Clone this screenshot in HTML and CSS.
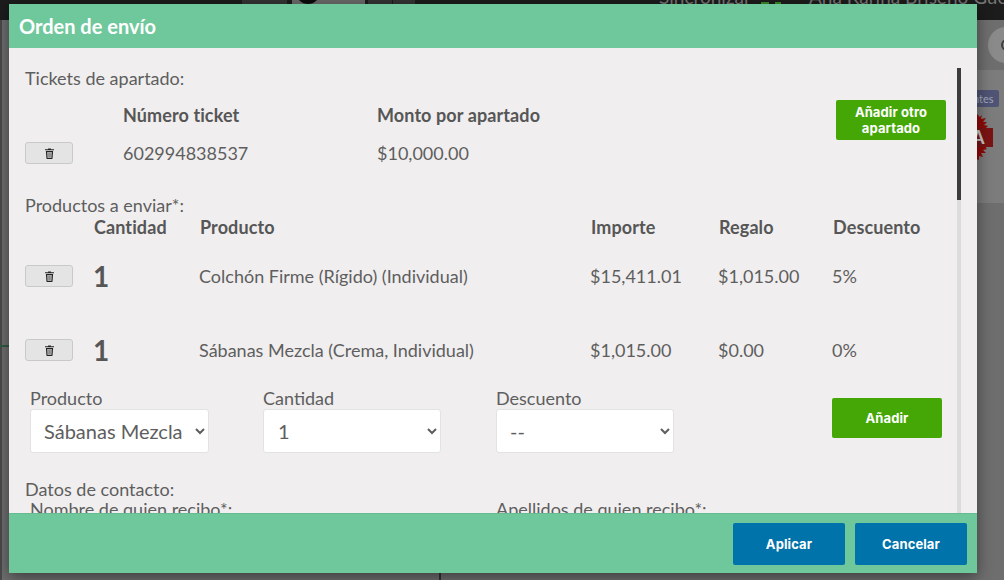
FILE: index.html
```html
<!DOCTYPE html>
<html lang="es">
<head>
<meta charset="utf-8">
<title>Orden de envío</title>
<link rel="stylesheet" href="styles.css">
</head>
<body>
<div class="backdrop">
  <div class="topbar">
    <span class="tab tab-a"></span><span class="tab tab-b"></span><span class="tab-dot"></span><span class="tab tab-c"></span><span class="tab tab-d"></span>
    <span class="topbar-text sync">Sincronizar</span>
    <span class="sync-mark"></span>
    <span class="topbar-text user">Ana Karina Briseño Guerrero</span>
  </div>
  <div class="bg-rail"></div>
  <div class="bg-rule"></div>
  <div class="bg-circle"><span class="bg-ring"></span></div>
  <div class="bg-panel"></div>
  <div class="bg-badge">ntes</div>
  <svg class="bg-logo" width="30" height="56" viewBox="0 0 30 56"><path d="M2 0l3 3 2-2-1 4 5-1-3 4 4 0-3 3 4 1-2 2v20l1 1-4 1 3 3-5 0 2 4-4-1 0 4-3-1 0 5-3 3V0z" fill="#8f0a0a"/><path d="M0 14h18v19H0z" fill="#7a1414"/><text x="-3" y="30" class="bg-logo-text">A</text></svg>
  <div class="bg-line"></div>
</div>

<div class="modal">
  <header class="modal-head">Orden de envío</header>
  <div class="modal-body">
    <div class="content">
      <p class="section-label">Tickets de apartado:</p>
      <div class="tickets">
        <div class="ticket-grid">
          <span></span>
          <strong>Número ticket</strong>
          <strong>Monto por apartado</strong>
          <button class="del" type="button" aria-label="Eliminar"><svg class="trash" viewBox="0 0 10 12"><use href="#t"/></svg></button>
          <span>602994838537</span>
          <span>$10,000.00</span>
        </div>
        <button class="btn green add-other" type="button">Añadir otro apartado</button>
      </div>

      <p class="section-label products-label">Productos a enviar*:</p>
      <div class="product-grid head">
        <span></span><strong>Cantidad</strong><strong>Producto</strong><strong>Importe</strong><strong>Regalo</strong><strong>Descuento</strong>
      </div>
      <div class="product-grid row">
        <button class="del" type="button" aria-label="Eliminar"><svg class="trash" viewBox="0 0 10 12"><use href="#t"/></svg></button>
        <b class="qty">1</b><span>Colchón Firme (Rígido) (Individual)</span><span>$15,411.01</span><span>$1,015.00</span><span>5%</span>
      </div>
      <div class="product-grid row second">
        <button class="del" type="button" aria-label="Eliminar"><svg class="trash" viewBox="0 0 10 12"><use href="#t"/></svg></button>
        <b class="qty">1</b><span>Sábanas Mezcla (Crema, Individual)</span><span>$1,015.00</span><span>$0.00</span><span>0%</span>
      </div>

      <div class="form-row">
        <label class="field">Producto
          <select><option>Sábanas Mezcla (Crema, Individual)</option></select>
        </label>
        <label class="field">Cantidad
          <select><option>1</option></select>
        </label>
        <label class="field">Descuento
          <select><option>--</option></select>
        </label>
        <button class="btn green add" type="button">Añadir</button>
      </div>

      <p class="section-label contact-label">Datos de contacto:</p>
      <div class="contact-row">
        <span>Nombre de quien recibo*:</span>
        <span>Apellidos de quien recibo*:</span>
      </div>
    </div>
    <div class="scrollbar"><div class="thumb"></div></div>
  </div>
  <footer class="modal-foot">
    <button class="btn blue" type="button">Aplicar</button>
    <button class="btn blue" type="button">Cancelar</button>
  </footer>
</div>

<svg class="defs" width="0" height="0" aria-hidden="true"><symbol id="t" viewBox="0 0 10 12"><path d="M3.4 1.3V.4h3.2v.9H10v1.2H0V1.3z" fill="#222"/><path d="M1 3.2h8l-.6 8.1a.7.7 0 0 1-.7.7H2.3a.7.7 0 0 1-.7-.7zM2.6 4.3l.3 6.6h4.2l.3-6.6z" fill="#222" fill-rule="evenodd"/><path d="M4 4.6h.7v6H4zM5.3 4.6H6v6h-.7z" fill="#222"/></symbol></svg>
</body>
</html>
```
FILE: styles.css
```css
* { box-sizing: border-box; }
html, body { margin: 0; height: 100%; }
body {
  width: 1004px; height: 580px; overflow: hidden; position: relative;
  background: #6e6e6e;
  font-family: Lato, "Liberation Sans", sans-serif;
  font-size: 18px; color: #5e5e5e;
}
.backdrop { position: absolute; inset: 0; overflow: hidden; background: #6e6e6e; }
.topbar { height: 20px; background: #1c1c1c; position: relative; overflow: hidden; }
.tab { position: absolute; top: 0; height: 4px; background: #343434; }
.tab-a { left: 242px; width: 45px; }
.tab-b { left: 292px; width: 73px; background: #6a6a6a; }
.tab-dot { position: absolute; left: 296px; top: -20px; width: 24px; height: 24px; border-radius: 50%; background: #0c0c0c; }
.tab-c { left: 368px; width: 24px; }
.tab-d { left: 393px; width: 22px; }
.topbar-text { position: absolute; top: -13px; font-size: 19px; line-height: 20px; color: #777; white-space: nowrap; }
.sync { left: 659px; }
.sync-mark { position: absolute; left: 761px; top: 2px; width: 20px; height: 2px; background: linear-gradient(90deg, #3c8a2a 0 8px, transparent 8px 14px, #3c8a2a 14px); }
.user { left: 809px; }
.bg-rail { position: absolute; left: 0; top: 20px; bottom: 0; width: 2px; background: #4a4a4a; }
.bg-rule { position: absolute; left: 0; top: 345px; width: 9px; height: 2px; background: #2f5a45; }
.bg-circle { position: absolute; left: 988px; top: 27px; width: 36px; height: 36px; border-radius: 50%; background: #8a8a8a; }
.bg-ring { position: absolute; left: 13px; top: 12px; width: 12px; height: 12px; border: 2px solid #3f3f3f; border-radius: 50%; }
.bg-panel { position: absolute; left: 977px; top: 70px; width: 27px; height: 133px; background: #7c7c7c; }
.bg-badge { position: absolute; left: 970px; top: 90px; width: 29px; height: 17px; padding-left: 3px; border-radius: 2px; background: #4f5475; color: #a4a7bb; font-size: 11px; line-height: 17px; overflow: hidden; }
.bg-logo { position: absolute; left: 975px; top: 114px; }
.bg-logo-text { font: 700 18px Lato, sans-serif; fill: #c9c9c9; }
.bg-line { position: absolute; left: 439px; top: 570px; width: 2px; height: 10px; background: #333; }

.modal { position: absolute; left: 9px; top: 4px; width: 968px; height: 569px;
  display: flex; flex-direction: column; background: #f0eeef;
  box-shadow: 0 4px 14px rgba(0,0,0,.45); }
.modal-head { height: 44px; flex: none; padding: 0 10px; background: #6fc79c; color: #fff; font-size: 20px; font-weight: 700; line-height: 44px; }
.modal-body { flex: 1; min-height: 0; position: relative; overflow: hidden; }
.content { padding: 20px 31px 0 16px; }
p { margin: 0; }
.section-label { line-height: 20px; }
strong { font-weight: 700; letter-spacing: .1px; color: #565656; }

.tickets { display: flex; justify-content: space-between; align-items: flex-start; padding-top: 12px; }
.ticket-grid { display: grid; grid-template-columns: 98px 254px auto; grid-template-rows: 28px 48px; align-items: center; margin-top: 1px; }
.add-other { width: 110px; height: 40px; }

.products-label { margin-top: 18px; }
.product-grid { display: grid; grid-template-columns: 69px 105px 391px 128px 114px auto; align-items: center; }
.head { height: 24px; }
.head strong:nth-child(n+3) { padding-left: 1px; }
.row { margin-top: 19px; height: 36px; }
.row.second { margin-top: 38px; }
.qty { font-size: 28px; font-weight: 700; line-height: 36px; color: #565656; margin-left: -1px; }
.del { width: 48px; height: 22px; padding: 0; display: flex; align-items: center; justify-content: center; background: #e4e4e4; border: 1px solid #c9c9c9; border-radius: 3px; }
.trash { width: 9px; height: 11px; display: block; }

.form-row { display: flex; align-items: flex-start; margin: 20px 0 0 5px; }
.field { width: 233px; display: block; line-height: 20px; }
.field select { display: block; width: 178px; height: 44px; margin-top: 1px; padding: 0 9px; font: 20px Lato, sans-serif; color: #5e5e5e; background: #fff; border: 1px solid #e3e3e3; border-radius: 3px; }
.field:first-child select { width: 179px; }
.field:nth-child(2) select { padding-left: 10px; }
.add { width: 110px; height: 40px; margin: 10px 0 0 103px; }

.contact-label { margin-top: 26px; }
.contact-row { display: grid; grid-template-columns: 466px auto; padding-left: 5px; line-height: 20px; }

.scrollbar { position: absolute; left: 948px; top: 20px; bottom: 0; width: 4px; background: #dcdcdc; }
.thumb { height: 132px; background: #3c3c3c; }

.modal-foot { height: 60px; flex: none; display: flex; justify-content: flex-end; gap: 10px; padding: 9px 10px 0 0; background: #6fc79c; border-top: 1px solid #66bb91; }
.btn { border: 0; border-radius: 2px; color: #fff; font: 700 13px/16px Inter, "Liberation Sans", sans-serif; letter-spacing: .1px; }
.green { background: #44a706; }
.blue { width: 112px; height: 42px; background: #0073aa; }
.defs { position: absolute; }
```
